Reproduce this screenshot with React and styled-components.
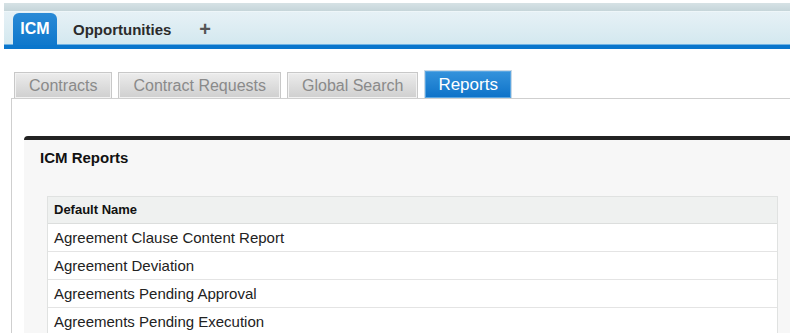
import React from "react";
import styled, { createGlobalStyle } from "styled-components";

const Global = createGlobalStyle`
  html, body { margin: 0; padding: 0; background: #fff; }
  body { font-family: "Liberation Sans", Arial, sans-serif; }
`;

const Page = styled.div`
  width: 794px;
  height: 333px;
  overflow: hidden;
  background: #fff;
`;

const TopBar = styled.div`
  margin: 3px 4px 0 4px;
  width: 786px;
`;

const Stripe = styled.div`
  height: 8px;
  background: linear-gradient(#d6e2e5, #c6d6da);
`;

const NavBar = styled.div`
  height: 33px;
  display: flex;
  align-items: flex-end;
  padding-left: 9px;
  background: linear-gradient(#e6f1f6, #d3e8ef);
  border-top: 1px solid #eef6f9;
  border-bottom: 4px solid #0a76cc;
  box-shadow: inset 0 -1px 0 #6fb3e4;
`;

const NavTab = styled.div`
  height: 32px;
  display: flex;
  align-items: center;
  font-weight: bold;
  font-size: ${(p) => (p.$active ? "16px" : "15px")};
  color: ${(p) => (p.$active ? "#fff" : "#2b2b2b")};
  padding: ${(p) => (p.$active ? "0 6px" : "0 16px")};
  width: ${(p) => (p.$active ? "44px" : "auto")};
  box-sizing: border-box;
  justify-content: center;
  border-radius: 6px 6px 0 0;
  background: ${(p) =>
    p.$active ? "linear-gradient(#2a8ad6, #0f78cc)" : "transparent"};
`;

const Plus = styled.div`
  height: 32px;
  display: flex;
  align-items: center;
  margin-left: 12px;
  font-weight: bold;
  font-size: 20px;
  color: #555;
`;

const TabRow = styled.div`
  margin: 21px 4px 0 11px;
  padding-left: 3px;
  display: flex;
  align-items: flex-end;
  gap: 6px;
  border-bottom: 1px solid #cfcfcf;
`;

const Tab = styled.div`
  height: ${(p) => (p.$active ? "28px" : "26px")};
  box-sizing: border-box;
  padding: ${(p) => (p.$active ? "0 13px" : "0 14px")};
  display: flex;
  align-items: center;
  font-size: ${(p) => (p.$active ? "17px" : "16px")};
  color: ${(p) => (p.$active ? "#fff" : "#8a8a8a")};
  border: 1px solid ${(p) => (p.$active ? "#c9d9e6" : "#c8c8c8")};
  border-bottom: none;
  box-shadow: inset 0 0 0 1px ${(p) => (p.$active ? "#5aa6e2" : "#f2f2f2")};
  background: ${(p) =>
    p.$active
      ? "linear-gradient(#3593dc, #0d72c8)"
      : "linear-gradient(#ececec, #cfcfcf)"};
`;

const Content = styled.div`
  margin-left: 11px;
  border-left: 1px solid #cfcfcf;
  padding: 37px 0 0 12px;
`;

const Panel = styled.div`
  width: 766px;
  border-top: 4px solid #222;
  border-radius: 4px 0 0 0;
  background: #f7f7f7;
  padding-bottom: 20px;
`;

const Title = styled.div`
  padding: 9px 0 0 16px;
  height: 17px;
  line-height: 17px;
  font-size: 15px;
  font-weight: bold;
  color: #111;
`;

const Table = styled.div`
  margin: 30px 0 0 23px;
  width: 729px;
  border: 1px solid #e0e2e1;
  border-bottom: none;
  background: #fff;
`;

const HeadCell = styled.div`
  height: 26px;
  line-height: 26px;
  padding-left: 6px;
  background: #eff1f0;
  border-bottom: 1px solid #dcdedd;
  font-size: 13px;
  font-weight: bold;
  color: #111;
`;

const Row = styled.div`
  height: 27px;
  line-height: 27px;
  padding-left: 6px;
  border-bottom: 1px solid #e4e4e4;
  font-size: 15px;
  color: #222;
`;

const rows = [
  "Agreement Clause Content Report",
  "Agreement Deviation",
  "Agreements Pending Approval",
  "Agreements Pending Execution",
];

const tabs = ["Contracts", "Contract Requests", "Global Search", "Reports"];

export default function App() {
  return (
    <Page>
      <Global />
      <TopBar>
        <Stripe />
        <NavBar>
          <NavTab $active>ICM</NavTab>
          <NavTab>Opportunities</NavTab>
          <Plus>+</Plus>
        </NavBar>
      </TopBar>
      <TabRow>
        {tabs.map((t) => (
          <Tab key={t} $active={t === "Reports"}>
            {t}
          </Tab>
        ))}
      </TabRow>
      <Content>
        <Panel>
          <Title>ICM Reports</Title>
          <Table>
            <HeadCell>Default Name</HeadCell>
            {rows.map((r) => (
              <Row key={r}>{r}</Row>
            ))}
          </Table>
        </Panel>
      </Content>
    </Page>
  );
}
